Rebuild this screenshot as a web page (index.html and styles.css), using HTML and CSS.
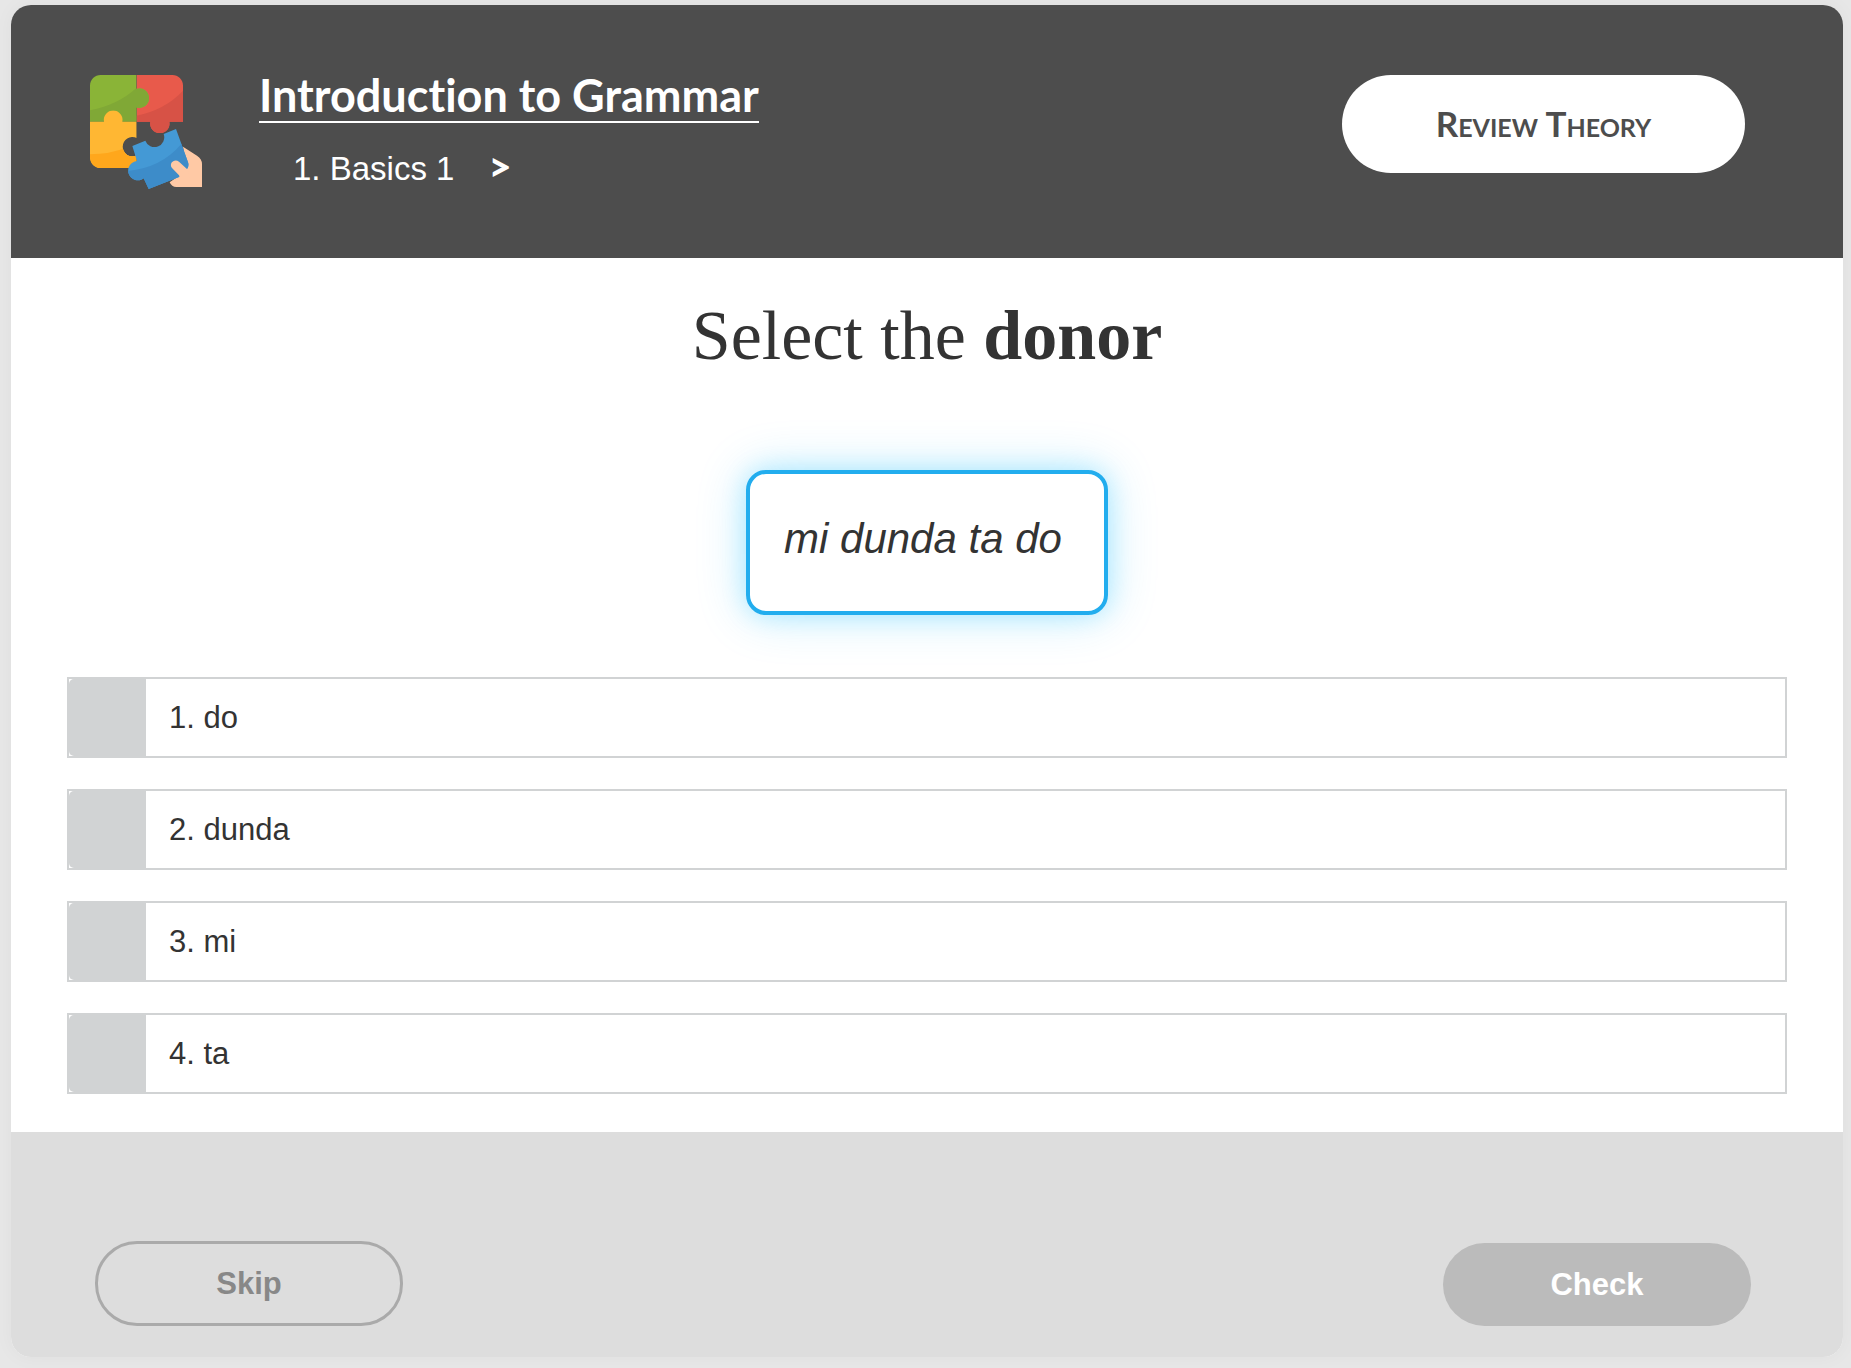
FILE: index.html
```html
<!DOCTYPE html>
<html lang="en">
<head>
<meta charset="utf-8">
<title>Introduction to Grammar</title>
<link rel="stylesheet" href="styles.css">
</head>
<body>
<main class="card">
  <header class="header">
    <svg class="logo" viewBox="60 45 336 345" aria-hidden="true">
      <defs>
        <clipPath id="green"><path d="M60 185V77a32 32 0 0 1 32-32H199V87a29 29 0 1 1 0 55V185Z"/></clipPath>
        <clipPath id="red"><path d="M199 45H307a32 32 0 0 1 32 32V185H298a29 29 0 1 1-57 0H199Z"/></clipPath>
        <clipPath id="yellow"><path d="M60 185H102a28 28 0 1 1 55 0H200V234a29 29 0 1 0 0 52V324H92a32 32 0 0 1-32-32Z"/></clipPath>
        <clipPath id="blue"><path d="M187 258L226 242A29 29 0 1 0 281 222L318 207L356 312Q356 324 347 330L327 351L236 387L221 355A29 29 0 1 1 201 303Z"/></clipPath>
      </defs>
      <g clip-path="url(#red)"><path fill="#e85a4b" d="M199 45H340V230H199Z"/><path fill="#d75246" d="M199 167Q285 150 340 91V230H199Z"/></g>
      <g clip-path="url(#green)"><path fill="#8ab437" d="M60 45H240V186H60Z"/><path fill="#80a836" d="M60 151Q145 134 199 84L240 70V186H60Z"/></g>
      <g clip-path="url(#yellow)"><path fill="#ffb733" d="M60 140H201V325H60Z"/><path fill="#ffa71c" d="M60 283Q120 283 172 262L201 290V325H60Z"/></g>
      <path fill="#ffc9a5" d="M339 260L381 287Q396 297 396 312V381H319Q305 381 299 367L325 349L350 325Z"/>
      <g clip-path="url(#blue)"><path fill="#4499d5" d="M170 200H360V390H170Z"/><path fill="#3d8cc9" d="M170 333Q272 325 334 252L360 245V390H170Z"/></g>
      <path fill="#ffc9a5" d="M330 354L327 346L306 324C295 309 314 294 327 305L354 330L360 354Z"/>
    </svg>
    <div class="titles">
      <h1 class="course"><a href="#course">Introduction to Grammar</a></h1>
      <p class="lesson"><span>1. Basics 1</span><a class="next" href="#next" aria-label="Next lesson">&gt;</a></p>
    </div>
    <button class="review" type="button">Review Theory</button>
  </header>
  <form class="exercise">
    <section class="question">
      <h2 class="prompt">Select the <strong>donor</strong></h2>
      <p class="sentence">mi dunda ta do</p>
      <div class="options" role="radiogroup" aria-label="Answers">
        <label class="option"><input type="radio" name="answer"><span>1. do</span></label>
        <label class="option"><input type="radio" name="answer"><span>2. dunda</span></label>
        <label class="option"><input type="radio" name="answer"><span>3. mi</span></label>
        <label class="option"><input type="radio" name="answer"><span>4. ta</span></label>
      </div>
    </section>
    <footer class="actions">
      <button class="action skip" type="button">Skip</button>
      <button class="action check" type="button">Check</button>
    </footer>
  </form>
</main>
</body>
</html>
```
FILE: styles.css
```css
* { box-sizing: border-box; }

body {
  margin: 0;
  padding: 5px 8px 12px 11px;
  background: #e7e7e7;
  color: #333;
  font-family: "Liberation Sans", Arial, sans-serif;
}

h1, h2, p { margin: 0; font-weight: normal; }
button { font-family: inherit; cursor: pointer; }

.card {
  border-radius: 20px;
  overflow: hidden;
  background: #fff;
  box-shadow: 0 0 20px rgba(0, 0, 0, 0.04);
}

.header {
  display: flex;
  align-items: flex-start;
  padding: 70px 98px 68px 79px;
  background: #4d4d4d;
  color: #fff;
}

.logo { flex: none; width: 112px; height: 115px; }

.titles { flex: 1; margin-left: 57px; }

.course {
  font: 700 45px/40px Lato, sans-serif;
  font-variant-ligatures: none;
}

.course a {
  display: inline-block;
  padding-bottom: 6px;
  border-bottom: 2px solid #fff;
  color: inherit;
  text-decoration: none;
}

.lesson {
  display: flex;
  gap: 34px;
  padding: 27px 0 0 34px;
  font-size: 33px;
  line-height: 38px;
}

.next {
  color: inherit;
  font: 900 40px/32px Lato, sans-serif;
  text-decoration: none;
}

.review {
  width: 403px;
  height: 98px;
  padding-bottom: 4px;
  border: 0;
  border-radius: 49px;
  background: #fff;
  color: #4d4d4d;
  font: 700 35px/40px Lato, sans-serif;
  font-variant: small-caps;
}

.question {
  display: flex;
  flex-direction: column;
  align-items: center;
  padding: 38px 56px;
}

.prompt {
  font: 70px/80px "Liberation Serif", "Times New Roman", serif;
}

.sentence {
  margin: 94px 0 62px;
  padding: 41px 42px 48px 34px;
  border: 4px solid #22adee;
  border-radius: 20px;
  box-shadow: 0 0 24px rgba(0, 190, 255, 0.22), 0 0 50px rgba(0, 180, 250, 0.24);
  font-size: 42px;
  font-style: italic;
  line-height: 48px;
}

.options {
  display: grid;
  gap: 31px;
  width: 100%;
}

.option {
  display: flex;
  align-items: center;
  gap: 23px;
  border: 2px solid #d1d3d4;
  font-size: 31px;
  cursor: pointer;
}

.option input {
  appearance: none;
  width: 77px;
  height: 77px;
  margin: 0;
  border-radius: 5px 0 0 5px;
  background: #d1d3d4;
}

.option input:checked { background: #22adee; }

.actions {
  display: flex;
  align-items: flex-end;
  justify-content: space-between;
  padding: 109px 92px 31px 84px;
  background: #ddd;
}

.action {
  width: 308px;
  height: 83px;
  border: 0;
  border-radius: 42px;
  font-size: 31px;
  font-weight: bold;
}

.skip {
  height: 85px;
  border: 3px solid #aaa;
  background: transparent;
  color: #888;
}

.check { background: #bbb; color: #fff; }
```
